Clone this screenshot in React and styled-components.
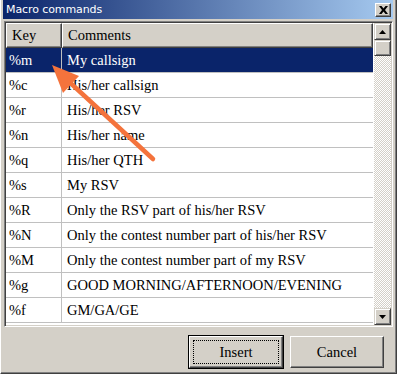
import styled, { createGlobalStyle } from "styled-components";

const rows = [
  ["%m", "My callsign"],
  ["%c", "His/her callsign"],
  ["%r", "His/her RSV"],
  ["%n", "His/her name"],
  ["%q", "His/her QTH"],
  ["%s", "My RSV"],
  ["%R", "Only the RSV part of his/her RSV"],
  ["%N", "Only the contest number part of his/her RSV"],
  ["%M", "Only the contest number part of my RSV"],
  ["%g", "GOOD MORNING/AFTERNOON/EVENING"],
  ["%f", "GM/GA/GE"],
];

const App = () => {
  return (
    <>
      <GlobalStyle />
      <Window>
        <TitleBar>
          <Title>Macro commands</Title>
          <CloseButton>
            <svg width="9" height="8" viewBox="0 0 9 8">
              <path
                d="M0 0h2.5L4.5 2.5 6.5 0H9L6 4l3 4H6.5L4.5 5.5 2.5 8H0l3-4z"
                fill="#000"
              />
            </svg>
          </CloseButton>
        </TitleBar>

        <ListBox>
          <Table>
            <HeaderRow>
              <HeaderCell>Key</HeaderCell>
              <HeaderCell>Comments</HeaderCell>
            </HeaderRow>
            {rows.map(([key, comment], i) => (
              <Row key={key} $selected={i === 0}>
                <KeyCell>{key}</KeyCell>
                <CommentCell>{comment}</CommentCell>
              </Row>
            ))}
          </Table>
          <ScrollBar>
            <ArrowButton>
              <svg width="7" height="4" viewBox="0 0 7 4">
                <path d="M3.5 0L7 4H0z" fill="#000" />
              </svg>
            </ArrowButton>
            <Thumb />
            <Track />
            <ArrowButton>
              <svg width="7" height="4" viewBox="0 0 7 4">
                <path d="M0 0h7L3.5 4z" fill="#000" />
              </svg>
            </ArrowButton>
          </ScrollBar>
        </ListBox>

        <Footer>
          <Button $default>
            <Focus>Insert</Focus>
          </Button>
          <Button>Cancel</Button>
        </Footer>

        <Annotation width="397" height="374" viewBox="0 0 397 374">
          <line
            x1="152"
            y1="159"
            x2="64"
            y2="78"
            stroke="#f4733c"
            strokeWidth="4.5"
            strokeLinecap="round"
          />
          <path d="M51 65 L78 76 L62 93 Z" fill="#f4733c" />
        </Annotation>
      </Window>
    </>
  );
};

export default App;

const GlobalStyle = createGlobalStyle`
  * {
    box-sizing: border-box;
  }
  body {
    margin: 0;
    background: #d4d0c8;
  }
`;

const Window = styled.div`
  position: relative;
  width: 397px;
  height: 374px;
  display: flex;
  flex-direction: column;
  padding: 0 3px 3px 3px;
  background: #d4d0c8;
  border-left: 1px solid #fff;
  border-right: 1px solid #404040;
  border-bottom: 1px solid #404040;
  box-shadow: inset -1px -1px 0 #808080;
  overflow: hidden;
`;

const TitleBar = styled.div`
  height: 19px;
  flex-shrink: 0;
  display: flex;
  align-items: center;
  justify-content: space-between;
  padding: 0 2px 0 3px;
  margin-left: -1px;
  background: linear-gradient(to right, #0a246a, #a6caf0);
`;

const Title = styled.span`
  color: #fff;
  font-family: "DejaVu Sans", sans-serif;
  font-size: 11px;
  letter-spacing: -0.1px;
`;

const CloseButton = styled.div`
  width: 16px;
  height: 14px;
  display: flex;
  align-items: center;
  justify-content: center;
  background: #d4d0c8;
  border-top: 1px solid #fff;
  border-left: 1px solid #fff;
  border-right: 1px solid #404040;
  border-bottom: 1px solid #404040;
  box-shadow: inset -1px -1px 0 #808080;
`;

const ListBox = styled.div`
  margin-top: 2px;
  height: 306px;
  flex-shrink: 0;
  display: flex;
  background: #fff;
  border-top: 1px solid #808080;
  border-left: 1px solid #808080;
  border-right: 1px solid #fff;
  border-bottom: 1px solid #fff;
  box-shadow: inset 1px 1px 0 #404040, inset -1px -1px 0 #d4d0c8;
  padding: 1px;
  overflow: hidden;
`;

const Table = styled.div`
  flex: 1;
  display: flex;
  flex-direction: column;
  overflow: hidden;
`;

const HeaderRow = styled.div`
  display: grid;
  grid-template-columns: 56px 1fr;
  height: 25px;
  flex-shrink: 0;
`;

const HeaderCell = styled.div`
  display: flex;
  align-items: center;
  padding-left: 5px;
  background: #d4d0c8;
  border-top: 1px solid #fff;
  border-left: 1px solid #fff;
  border-right: 1px solid #404040;
  border-bottom: 1px solid #404040;
  box-shadow: inset -1px -1px 0 #808080;
  font-family: "Liberation Serif", "Times New Roman", serif;
  font-size: 14.5px;
  color: #000;
`;

const Row = styled.div`
  display: grid;
  grid-template-columns: 56px 1fr;
  height: 25px;
  flex-shrink: 0;
  background: ${(p) => (p.$selected ? "#0a246a" : "#fff")};
  color: ${(p) => (p.$selected ? "#fff" : "#000")};
  font-family: "Liberation Serif", "Times New Roman", serif;
  font-size: 14.5px;
`;

const KeyCell = styled.div`
  display: flex;
  align-items: center;
  padding-left: 3px;
  border-right: 1px solid #c0c0c0;
  border-bottom: 1px solid #c0c0c0;
`;

const CommentCell = styled.div`
  display: flex;
  align-items: center;
  padding-left: 5px;
  white-space: nowrap;
  border-bottom: 1px solid #c0c0c0;
`;

const ScrollBar = styled.div`
  width: 17px;
  flex-shrink: 0;
  display: flex;
  flex-direction: column;
  margin-left: 1px;
`;

const ArrowButton = styled.div`
  height: 17px;
  flex-shrink: 0;
  display: flex;
  align-items: center;
  justify-content: center;
  background: #d4d0c8;
  border-top: 1px solid #d4d0c8;
  border-left: 1px solid #d4d0c8;
  border-right: 1px solid #404040;
  border-bottom: 1px solid #404040;
  box-shadow: inset 1px 1px 0 #fff, inset -1px -1px 0 #808080;
`;

const Thumb = styled(ArrowButton)`
  height: 16px;
`;

const Track = styled.div`
  flex: 1;
  background-color: #fff;
  background-image: conic-gradient(
    #d4d0c8 25%,
    #fff 0 50%,
    #d4d0c8 0 75%,
    #fff 0
  );
  background-size: 2px 2px;
`;

const Footer = styled.div`
  flex: 1;
  display: flex;
  justify-content: flex-end;
  align-items: flex-start;
  gap: 7px;
  padding: 9px 9px 0 0;
`;

const Button = styled.div`
  width: 94px;
  height: 32px;
  display: flex;
  align-items: center;
  justify-content: center;
  padding: 3px;
  background: #d4d0c8;
  font-family: "Liberation Serif", "Times New Roman", serif;
  font-size: 14.5px;
  color: #000;
  border-top: 1px solid #fff;
  border-left: 1px solid #fff;
  border-right: 1px solid #404040;
  border-bottom: 1px solid #404040;
  box-shadow: ${(p) =>
    p.$default
      ? "0 0 0 1px #000, inset -1px -1px 0 #808080"
      : "inset -1px -1px 0 #808080"};
`;

const Focus = styled.div`
  width: 100%;
  height: 100%;
  display: flex;
  align-items: center;
  justify-content: center;
  border: 1px dotted #000;
`;

const Annotation = styled.svg`
  position: absolute;
  left: 0;
  top: 0;
  pointer-events: none;
`;
